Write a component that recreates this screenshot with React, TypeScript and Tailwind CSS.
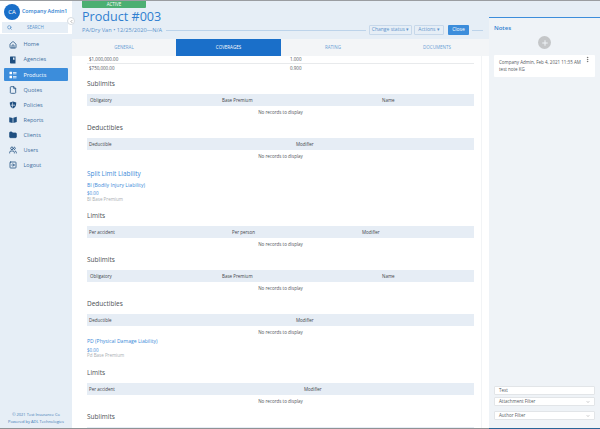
import React from "react";
import { Home, File, Shield, Folder, Users, SquareArrowRight, Search, ChevronLeft, Plus, MoreVertical, ChevronDown } from "lucide-react";

type IconProps = { size?: number; className?: string; strokeWidth?: number; fill?: string };

function AgencyIcon({ className }: IconProps) {
  return (
    <svg viewBox="0 0 16 16" width={8} height={8} className={className} fill="currentColor">
      <path d="M3 1h10v14H3.5A1.5 1.5 0 0 1 2 13.5V2a1 1 0 0 1 1-1z" />
      <path d="M8 3h3v5L9.5 6.8 8 8z" fill="#e6eef6" />
    </svg>
  );
}

function ProductIcon({ className }: IconProps) {
  return (
    <svg viewBox="0 0 16 16" width={8} height={8} className={className} fill="currentColor">
      <rect x="1" y="1.5" width="5" height="5" rx="0.5" />
      <rect x="1" y="9.5" width="5" height="5" rx="0.5" />
      <rect x="8" y="2" width="7" height="1.5" />
      <rect x="8" y="5" width="7" height="1.5" />
      <rect x="8" y="10" width="7" height="1.5" />
      <rect x="8" y="13" width="7" height="1.5" />
    </svg>
  );
}

function ReportIcon({ className }: IconProps) {
  return (
    <svg viewBox="0 0 16 16" width={8} height={8} className={className} fill="currentColor">
      <path d="M0.5 2.5 7.3 4v10L0.5 12.5z" />
      <path d="M15.5 1.5 8.7 3.5V14l6.8-2z" />
    </svg>
  );
}

function PolicyIcon({ className }: IconProps) {
  return (
    <svg viewBox="0 0 16 16" width={8} height={8} className={className} fill="currentColor">
      <path d="M8 .8 14.5 3c0 6-1.6 9.8-6.5 12.2C3.100 12.800 1.500 9 1.500 3z" />
      <path d="M8 3v4.500h4v1.500H8v4.200H6.800V9H3.300V7.500h3.500V3z" fill="#e6eef6" />
    </svg>
  );
}

const nav = [
  { label: "Home", Icon: Home, fill: false },
  { label: "Agencies", Icon: AgencyIcon, fill: false },
  { label: "Products", Icon: ProductIcon, fill: false, active: true },
  { label: "Quotes", Icon: File, fill: false },
  { label: "Policies", Icon: PolicyIcon, fill: false },
  { label: "Reports", Icon: ReportIcon, fill: false },
  { label: "Clients", Icon: Folder, fill: true },
  { label: "Users", Icon: Users, fill: false },
  { label: "Logout", Icon: SquareArrowRight, fill: false },
];

function Heading({ children, className }: { children: React.ReactNode; className: string }) {
  return <div className={`text-[6.5px] leading-[10px] text-[#4a4f55] ${className}`}>{children}</div>;
}

function Table({ cols, cls }: { cols: string[]; cls: string[] }) {
  return (
    <div>
      <div className="flex items-center h-3 bg-[#e6edf5] text-[4.5px] text-[#3f444a]">
        {cols.map((c, i) => (
          <div key={c} className={cls[i]}>{c}</div>
        ))}
      </div>
      <div className="h-3 flex items-center justify-center text-[4.5px] text-[#4f545a]">No records to display</div>
    </div>
  );
}

const sub = { cols: ["Obligatory", "Base Premium", "Name"], cls: ["w-[135px] pl-[3px]", "w-[160px]", "flex-1"] };
const ded = { cols: ["Deductible", "Modifier"], cls: ["w-[209px] pl-[2px]", "flex-1"] };

export default function App() {
  return (
    <div className="w-[600px] h-[429px] overflow-hidden flex flex-col bg-white font-['Open_Sans',sans-serif]">
      <div className="h-px bg-[#9a9da1] shrink-0" />
      <div className="flex flex-1 min-h-0">
        <aside className="w-[72px] shrink-0 bg-[#e6eef6] flex flex-col relative">
          <div className="bg-white h-[33px] shrink-0 pt-[3px] pl-1">
            <div className="flex items-center gap-[2px]">
              <div className="w-[16px] h-[16px] rounded-full bg-[#1a6fc9] text-white text-[6px] flex items-center justify-center">CA</div>
              <div className="text-[5.3px] font-semibold text-[#2f7fd0] whitespace-nowrap">Company Admin1</div>
            </div>
            <div className="mt-[2px] mr-[4px] -ml-[2px] h-[11px] bg-[#e6eef6] flex items-center text-[4.5px] text-[#5b93cc]">
              <Search size={5} strokeWidth={3} className="ml-[5px] text-[#4a86c4]" />
              <span className="ml-[15px]">SEARCH</span>
            </div>
          </div>
          <div className="absolute left-[67px] top-[16px] w-[8px] h-[8px] rounded-full bg-white border border-[#d5dbe1] flex items-center justify-center">
            <ChevronLeft size={5} className="text-[#555]" />
          </div>
          <nav className="flex flex-col gap-[2.1px] px-1 pt-[4px]">
            {nav.map(({ label, Icon, active, fill }) => (
              <div key={label} className={`h-[13px] flex items-center text-[5.5px] rounded-[1px] ${active ? "bg-[#3c8ddb] text-white" : "text-[#3e6f9f]"}`}>
                <span className="w-[8px] ml-[5px] flex justify-center">
                  <Icon size={8} strokeWidth={2.4} fill={fill ? "currentColor" : "none"} className={active ? "text-white" : "text-[#1f4f80]"} />
                </span>
                <span className="ml-[6.5px]">{label}</span>
              </div>
            ))}
          </nav>
          <div className="mt-auto pb-[3px] text-center text-[4px] leading-[7px] text-[#3c78b4]">
            <div>© 2021 Test Insurance Co</div>
            <div>Powered by ADL Technologies</div>
          </div>
        </aside>

        <main className="w-[417px] shrink-0 flex flex-col min-h-0">
          <header className="h-[38px] shrink-0 bg-[#e6eef6] pl-[10px] flex flex-col">
            <div className="w-[64px] h-[7px] bg-[#4caf72] text-white text-[4.5px] flex items-center justify-center rounded-b-[1px]">ACTIVE</div>
            <div className="text-[12.6px] leading-[17px] text-[#2f7fd0]">Product #003</div>
            <div className="flex items-center">
              <span className="w-[84px] text-[5.65px] text-[#5b93cc] whitespace-nowrap">PA/Dry Van • 12/25/2020—N/A</span>
              <div className="w-[200px] h-px bg-[#bcd3ea]" />
              <button className="h-[10px] w-[43px] ml-[3px] border border-[#c7d8ea] rounded-[1px] text-[5px] text-[#5b93cc]">Change status ▾</button>
              <button className="h-[10px] w-[30px] ml-[2px] border border-[#c7d8ea] rounded-[1px] text-[5px] text-[#5b93cc]">Actions ▾</button>
              <button className="h-[10px] w-[21px] ml-[4px] bg-[#3c8ddb] rounded-[1px] text-[5px] text-white">Close</button>
              <div className="w-[11px] h-px ml-[3px] bg-[#bcd3ea]" />
            </div>
          </header>
          <div className="h-[17px] shrink-0 flex bg-[#f3f5f7] text-[4.5px] text-[#6aa0d6]">
            <div className="w-[104px] flex items-center justify-center">GENERAL</div>
            <div className="w-[105px] flex items-center justify-center bg-[#1a6fc9] text-white">COVERAGES</div>
            <div className="w-[104px] flex items-center justify-center">RATING</div>
            <div className="w-[104px] flex items-center justify-center">DOCUMENTS</div>
          </div>
          <div className="flex-1 min-h-0 overflow-hidden pl-[15px] pr-[7px] mr-[7px] border-r border-[#f2f4f6]">
            <div className="flex items-center h-[9px] mt-[-1px] border-b border-[#e8eaec] text-[4.5px] text-[#4f545a]">
              <div className="w-[203px] pl-[2px]">$1,000,000.00</div><div>1.000</div>
            </div>
            <div className="flex items-center h-[9px] text-[4.5px] text-[#4f545a]">
              <div className="w-[203px] pl-[2px]">$750,000.00</div><div>0.900</div>
            </div>
            <Heading className="mt-[6px] mb-[5px]">Sublimits</Heading>
            <Table {...sub} />
            <Heading className="mt-[5px] mb-[5px]">Deductibles</Heading>
            <Table {...ded} />
            <div className="mt-[7px] text-[6.4px] leading-[10px] text-[#3a8ad8]">Split Limit Liability</div>
            <div className="mt-[2px] text-[5.1px] font-medium leading-[8px] text-[#3a8ad8]">BI (Bodily Injury Liability)</div>
            <div className="mt-[2.25px] text-[4.5px] leading-[5.5px] text-[#3a8ad8]">$0.00</div>
            <div className="text-[4.5px] leading-[5.5px] text-[#a8adb2]">BI Base Premium</div>
            <Heading className="mt-[9px] mb-[5px]">Limits</Heading>
            <Table cols={["Per accident", "Per person", "Modifier"]} cls={["w-[145px] pl-[2px]", "w-[130px]", "flex-1"]} />
            <Heading className="mt-[5px] mb-[5px]">Sublimits</Heading>
            <Table {...sub} />
            <Heading className="mt-[5px] mb-[5px]">Deductibles</Heading>
            <Table {...ded} />
            <div className="mt-[-1px] text-[5.1px] font-medium leading-[8px] text-[#3a8ad8]">PD (Physical Damage Liability)</div>
            <div className="mt-[2.25px] text-[4.5px] leading-[5.5px] text-[#3a8ad8]">$0.00</div>
            <div className="text-[4.5px] leading-[5.5px] text-[#a8adb2]">Pd Base Premium</div>
            <Heading className="mt-[9.5px] mb-[5px]">Limits</Heading>
            <Table cols={["Per accident", "Modifier"]} cls={["w-[217px] pl-[2px]", "flex-1"]} />
            <Heading className="mt-[5px] mb-[5px]">Sublimits</Heading>
            <div className="h-3 bg-[#e6edf5]" />
          </div>
        </main>

        <aside className="w-[111px] shrink-0 bg-[#e6eef6] flex flex-col">
          <div className="h-[16px] shrink-0" />
          <div className="flex-1 bg-[#eff3f7] border-t border-[#3c8ddb] flex flex-col px-[5px]">
            <div className="text-[6px] font-semibold text-[#2f7fd0] mt-[6px] leading-[8px]">Notes</div>
            <div className="self-center mt-[4px] w-[13px] h-[13px] rounded-full bg-[#c4c6c8] flex items-center justify-center">
              <Plus size={8} strokeWidth={3} className="text-[#eff3f7]" />
            </div>
            <div className="mt-[6px] h-[22px] bg-white rounded-[1px] relative pl-[5px] pt-[4px] text-[4.5px] leading-[6.5px] text-[#54595e]">
              <div>Company Admin, Feb 4, 2021 11:35 AM</div>
              <div>test note KG</div>
              <MoreVertical size={7} className="absolute right-[4px] top-[1px] text-[#555]" />
            </div>
            <div className="mt-auto mb-[8px] flex flex-col text-[4.5px] text-[#54595e]">
              <div className="h-[9px] bg-white border border-[#e2e5e8] rounded-[1px] flex items-center pl-[4px]">Text</div>
              <div className="mt-[2px] h-[9px] bg-white border border-[#e2e5e8] rounded-[1px] flex items-center justify-between px-[4px]">Attachment Filter<ChevronDown size={4} /></div>
              <div className="mt-[5px] h-[9px] bg-white border border-[#e2e5e8] rounded-[1px] flex items-center justify-between px-[4px]">Author Filter<ChevronDown size={4} /></div>
            </div>
          </div>
        </aside>
      </div>
      <div className="h-px flex shrink-0">
        <div className="w-[489px] bg-[#8f9295]" />
        <div className="flex-1 bg-[#2a6496]" />
      </div>
    </div>
  );
}
